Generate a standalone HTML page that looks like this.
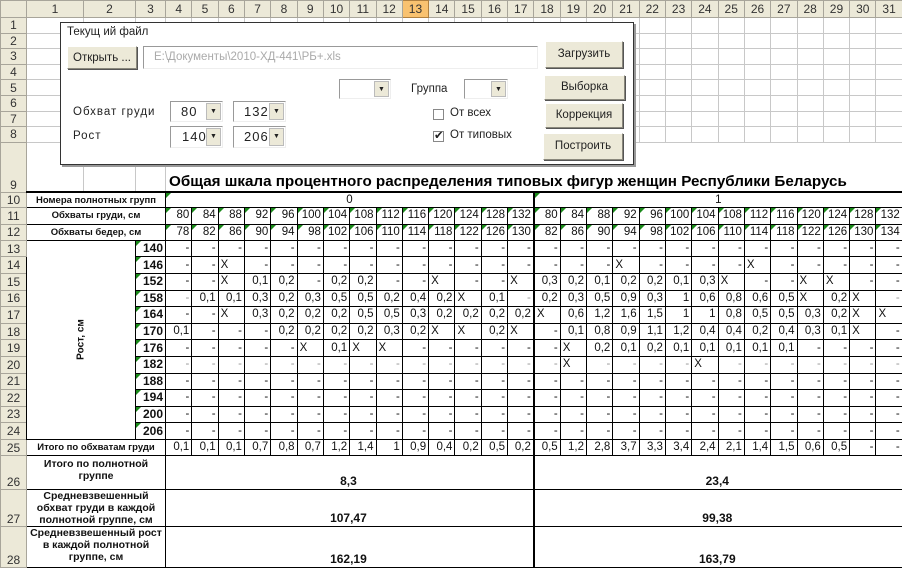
<!DOCTYPE html>
<html><head><meta charset="utf-8">
<style>
*{margin:0;padding:0;box-sizing:border-box}
body{width:902px;height:571px;overflow:hidden;background:#fff;font-family:"Liberation Sans",Arial,sans-serif;position:relative}
table{border-collapse:collapse;table-layout:fixed;position:absolute;left:0;top:0;width:902px}
td{border:1px solid #c8c8c8;font-size:11.5px;text-align:right;padding:0 2px 0 0;white-space:nowrap;overflow:hidden;line-height:13px;color:#111;position:relative}
th{background:#ece9d8;border:1px solid #a8a59a;font-weight:normal;font-size:12px;color:#333;text-align:center;padding:0}
thead th{height:17px}
th.hl{background:#f9c270;border-color:#b08040}
tbody th{text-align:center}
tr.t td{border-color:#000}
td.x{text-align:left;padding-left:2px}
td.c{text-align:center;padding:0}
td.lb{text-align:center;font-weight:bold;font-size:9.5px;line-height:11px;padding:0 1px;white-space:normal}
td.lb2{text-align:center;font-weight:bold;font-size:10.5px;line-height:12px;padding:0 5px;white-space:normal;vertical-align:top}
td.g::before{content:"";position:absolute;left:0;top:0;border-top:5px solid #1a8a1a;border-right:5px solid transparent}
td.k{font-weight:bold;font-size:12px}
tr.gy td{color:#999}
td.big{font-weight:bold;font-size:12px;text-align:center;vertical-align:bottom;padding-bottom:1px}
.tk{border-top:2px solid #000 !important}
.tl{border-left:2px solid #000 !important}
#dlg{position:absolute;left:60px;top:22px;width:574px;height:143px;background:#fff;border:1px solid #333;box-shadow:2px 2px 0 #999}
#dlg div{position:absolute;font-size:11.5px;color:#222}
.btn{background:#ece9d8;border:1px solid;border-color:#fff #8a887c #8a887c #fff;box-shadow:1px 1px 0 #555;text-align:center;line-height:22px}
.cb{border:1px solid;border-color:#999 #eee #eee #999;background:#fff}
.cb span{position:absolute;right:1px;top:1px;bottom:1px;width:15px;background:#ece9d8;border:1px solid #bbb;font-size:7px;text-align:center;line-height:15px}
.cb b{font-weight:normal;position:absolute;left:10px;top:2px;font-size:13px;letter-spacing:1px}
.chk{width:11px;height:11px;border:1px solid #888;background:#fff;font-size:10px;line-height:9px;text-align:center}
</style></head><body>
<table>
<colgroup><col style="width:26px"><col style="width:57px"><col style="width:52px"><col style="width:30px">
<col span="28" style="width:26.32px"></colgroup>
<thead><tr><th></th><th>1</th><th>2</th><th>3</th><th>4</th><th>5</th><th>6</th><th>7</th><th>8</th><th>9</th><th>10</th><th>11</th><th>12</th><th class="hl">13</th><th>14</th><th>15</th><th>16</th><th>17</th><th>18</th><th>19</th><th>20</th><th>21</th><th>22</th><th>23</th><th>24</th><th>25</th><th>26</th><th>27</th><th>28</th><th>29</th><th>30</th><th>31</th></tr></thead>
<tbody>
<tr style="height:15.6px"><th>1</th><td></td><td></td><td></td><td></td><td></td><td></td><td></td><td></td><td></td><td></td><td></td><td></td><td></td><td></td><td></td><td></td><td></td><td></td><td></td><td></td><td></td><td></td><td></td><td></td><td></td><td></td><td></td><td></td><td></td><td></td><td></td></tr>
<tr style="height:15.6px"><th>2</th><td></td><td></td><td></td><td></td><td></td><td></td><td></td><td></td><td></td><td></td><td></td><td></td><td></td><td></td><td></td><td></td><td></td><td></td><td></td><td></td><td></td><td></td><td></td><td></td><td></td><td></td><td></td><td></td><td></td><td></td><td></td></tr>
<tr style="height:15.6px"><th>3</th><td></td><td></td><td></td><td></td><td></td><td></td><td></td><td></td><td></td><td></td><td></td><td></td><td></td><td></td><td></td><td></td><td></td><td></td><td></td><td></td><td></td><td></td><td></td><td></td><td></td><td></td><td></td><td></td><td></td><td></td><td></td></tr>
<tr style="height:15.6px"><th>4</th><td></td><td></td><td></td><td></td><td></td><td></td><td></td><td></td><td></td><td></td><td></td><td></td><td></td><td></td><td></td><td></td><td></td><td></td><td></td><td></td><td></td><td></td><td></td><td></td><td></td><td></td><td></td><td></td><td></td><td></td><td></td></tr>
<tr style="height:15.6px"><th>5</th><td></td><td></td><td></td><td></td><td></td><td></td><td></td><td></td><td></td><td></td><td></td><td></td><td></td><td></td><td></td><td></td><td></td><td></td><td></td><td></td><td></td><td></td><td></td><td></td><td></td><td></td><td></td><td></td><td></td><td></td><td></td></tr>
<tr style="height:15.6px"><th>6</th><td></td><td></td><td></td><td></td><td></td><td></td><td></td><td></td><td></td><td></td><td></td><td></td><td></td><td></td><td></td><td></td><td></td><td></td><td></td><td></td><td></td><td></td><td></td><td></td><td></td><td></td><td></td><td></td><td></td><td></td><td></td></tr>
<tr style="height:15.6px"><th>7</th><td></td><td></td><td></td><td></td><td></td><td></td><td></td><td></td><td></td><td></td><td></td><td></td><td></td><td></td><td></td><td></td><td></td><td></td><td></td><td></td><td></td><td></td><td></td><td></td><td></td><td></td><td></td><td></td><td></td><td></td><td></td></tr>
<tr style="height:15.6px"><th>8</th><td></td><td></td><td></td><td></td><td></td><td></td><td></td><td></td><td></td><td></td><td></td><td></td><td></td><td></td><td></td><td></td><td></td><td></td><td></td><td></td><td></td><td></td><td></td><td></td><td></td><td></td><td></td><td></td><td></td><td></td><td></td></tr>
<tr style="height:50px"><th style="vertical-align:bottom">9</th><td></td><td></td><td></td><td colspan="28" style="border:none;text-align:left;vertical-align:bottom;font-weight:bold;font-size:15.2px;line-height:18px;padding-left:3px;color:#000">Общая шкала процентного распределения типовых фигур женщин Республики Беларусь</td></tr>
<tr class="t" style="height:15px"><th>10</th><td colspan="3" class="lb tk">Номера полнотных групп</td><td colspan="14" class="c g tk">0</td><td colspan="14" class="c g tk tl">1</td></tr>
<tr class="t" style="height:17px"><th>11</th><td colspan="3" class="lb">Обхваты груди, см</td><td class="g">80</td><td class="g">84</td><td class="g">88</td><td class="g">92</td><td class="g">96</td><td class="g">100</td><td class="g">104</td><td class="g">108</td><td class="g">112</td><td class="g">116</td><td class="g">120</td><td class="g">124</td><td class="g">128</td><td class="g">132</td><td class="g tl">80</td><td class="g">84</td><td class="g">88</td><td class="g">92</td><td class="g">96</td><td class="g">100</td><td class="g">104</td><td class="g">108</td><td class="g">112</td><td class="g">116</td><td class="g">120</td><td class="g">124</td><td class="g">128</td><td class="g">132</td></tr>
<tr class="t" style="height:16px"><th>12</th><td colspan="3" class="lb">Обхваты бедер, см</td><td class="g">78</td><td class="g">82</td><td class="g">86</td><td class="g">90</td><td class="g">94</td><td class="g">98</td><td class="g">102</td><td class="g">106</td><td class="g">110</td><td class="g">114</td><td class="g">118</td><td class="g">122</td><td class="g">126</td><td class="g">130</td><td class="g tl">82</td><td class="g">86</td><td class="g">90</td><td class="g">94</td><td class="g">98</td><td class="g">102</td><td class="g">106</td><td class="g">110</td><td class="g">114</td><td class="g">118</td><td class="g">122</td><td class="g">126</td><td class="g">130</td><td class="g">134</td></tr>
<tr class="t" style="height:16.6px"><th>13</th><td colspan="2" rowspan="12" class="c" style="font-weight:bold;font-size:10px"><div style="transform:rotate(-90deg);white-space:nowrap">Рост, см</div></td><td class="g k">140</td><td>-</td><td>-</td><td>-</td><td>-</td><td>-</td><td>-</td><td>-</td><td>-</td><td>-</td><td>-</td><td>-</td><td>-</td><td>-</td><td>-</td><td class="tl">-</td><td>-</td><td>-</td><td>-</td><td>-</td><td>-</td><td>-</td><td>-</td><td>-</td><td>-</td><td>-</td><td>-</td><td>-</td><td>-</td></tr>
<tr class="t" style="height:16.6px"><th>14</th><td class="g k">146</td><td>-</td><td>-</td><td class="x">X</td><td>-</td><td>-</td><td>-</td><td>-</td><td>-</td><td>-</td><td>-</td><td>-</td><td>-</td><td>-</td><td>-</td><td class="tl">-</td><td>-</td><td>-</td><td class="x">X</td><td>-</td><td>-</td><td>-</td><td>-</td><td class="x">X</td><td>-</td><td>-</td><td>-</td><td>-</td><td>-</td></tr>
<tr class="t" style="height:16.6px"><th>15</th><td class="g k">152</td><td>-</td><td>-</td><td class="x">X</td><td>0,1</td><td>0,2</td><td>-</td><td>0,2</td><td>0,2</td><td>-</td><td>-</td><td class="x">X</td><td>-</td><td>-</td><td class="x">X</td><td class="tl">0,3</td><td>0,2</td><td>0,1</td><td>0,2</td><td>0,2</td><td>0,1</td><td>0,3</td><td class="x">X</td><td>-</td><td>-</td><td class="x">X</td><td class="x">X</td><td>-</td><td>-</td></tr>
<tr class="t" style="height:16.6px"><th>16</th><td class="g k">158</td><td style="color:#999">-</td><td>0,1</td><td>0,1</td><td>0,3</td><td>0,2</td><td>0,3</td><td>0,5</td><td>0,5</td><td>0,2</td><td>0,4</td><td>0,2</td><td class="x">X</td><td>0,1</td><td style="color:#999">-</td><td class="tl">0,2</td><td>0,3</td><td>0,5</td><td>0,9</td><td>0,3</td><td>1</td><td>0,6</td><td>0,8</td><td>0,6</td><td>0,5</td><td class="x">X</td><td>0,2</td><td class="x">X</td><td style="color:#999">-</td></tr>
<tr class="t" style="height:16.6px"><th>17</th><td class="g k">164</td><td>-</td><td>-</td><td class="x">X</td><td>0,3</td><td>0,2</td><td>0,2</td><td>0,2</td><td>0,5</td><td>0,5</td><td>0,3</td><td>0,2</td><td>0,2</td><td>0,2</td><td>0,2</td><td class="x tl">X</td><td>0,6</td><td>1,2</td><td>1,6</td><td>1,5</td><td>1</td><td>1</td><td>0,8</td><td>0,5</td><td>0,5</td><td>0,3</td><td>0,2</td><td class="x">X</td><td class="x">X</td></tr>
<tr class="t" style="height:16.6px"><th>18</th><td class="g k">170</td><td>0,1</td><td>-</td><td>-</td><td>-</td><td>0,2</td><td>0,2</td><td>0,2</td><td>0,2</td><td>0,3</td><td>0,2</td><td class="x">X</td><td class="x">X</td><td>0,2</td><td class="x">X</td><td class="tl">-</td><td>0,1</td><td>0,8</td><td>0,9</td><td>1,1</td><td>1,2</td><td>0,4</td><td>0,4</td><td>0,2</td><td>0,4</td><td>0,3</td><td>0,1</td><td class="x">X</td><td>-</td></tr>
<tr class="t" style="height:16.6px"><th>19</th><td class="g k">176</td><td>-</td><td>-</td><td>-</td><td>-</td><td>-</td><td class="x">X</td><td>0,1</td><td class="x">X</td><td class="x">X</td><td>-</td><td>-</td><td>-</td><td>-</td><td>-</td><td class="tl">-</td><td class="x">X</td><td>0,2</td><td>0,1</td><td>0,2</td><td>0,1</td><td>0,1</td><td>0,1</td><td>0,1</td><td>0,1</td><td>-</td><td>-</td><td>-</td><td>-</td></tr>
<tr class="t gy" style="height:16.6px"><th>20</th><td class="g k" style="color:#111">182</td><td>-</td><td>-</td><td>-</td><td>-</td><td>-</td><td>-</td><td>-</td><td>-</td><td>-</td><td>-</td><td>-</td><td>-</td><td>-</td><td>-</td><td class="tl">-</td><td class="x" style="color:#111">X</td><td>-</td><td>-</td><td>-</td><td>-</td><td class="x" style="color:#111">X</td><td>-</td><td>-</td><td>-</td><td>-</td><td>-</td><td>-</td><td>-</td></tr>
<tr class="t" style="height:16.6px"><th>21</th><td class="g k">188</td><td>-</td><td>-</td><td>-</td><td>-</td><td>-</td><td>-</td><td>-</td><td>-</td><td>-</td><td>-</td><td>-</td><td>-</td><td>-</td><td>-</td><td class="tl">-</td><td>-</td><td>-</td><td>-</td><td>-</td><td>-</td><td>-</td><td>-</td><td>-</td><td>-</td><td>-</td><td>-</td><td>-</td><td>-</td></tr>
<tr class="t" style="height:16.6px"><th>22</th><td class="g k">194</td><td>-</td><td>-</td><td>-</td><td>-</td><td>-</td><td>-</td><td>-</td><td>-</td><td>-</td><td>-</td><td>-</td><td>-</td><td>-</td><td>-</td><td class="tl">-</td><td>-</td><td>-</td><td>-</td><td>-</td><td>-</td><td>-</td><td>-</td><td>-</td><td>-</td><td>-</td><td>-</td><td>-</td><td>-</td></tr>
<tr class="t" style="height:16.6px"><th>23</th><td class="g k">200</td><td>-</td><td>-</td><td>-</td><td>-</td><td>-</td><td>-</td><td>-</td><td>-</td><td>-</td><td>-</td><td>-</td><td>-</td><td>-</td><td>-</td><td class="tl">-</td><td>-</td><td>-</td><td>-</td><td>-</td><td>-</td><td>-</td><td>-</td><td>-</td><td>-</td><td>-</td><td>-</td><td>-</td><td>-</td></tr>
<tr class="t" style="height:16.6px"><th>24</th><td class="g k">206</td><td>-</td><td>-</td><td>-</td><td>-</td><td>-</td><td>-</td><td>-</td><td>-</td><td>-</td><td>-</td><td>-</td><td>-</td><td>-</td><td>-</td><td class="tl">-</td><td>-</td><td>-</td><td>-</td><td>-</td><td>-</td><td>-</td><td>-</td><td>-</td><td>-</td><td>-</td><td>-</td><td>-</td><td>-</td></tr>
<tr class="t" style="height:16.6px"><th>25</th><td colspan="3" class="lb">Итого по обхватам груди</td><td>0,1</td><td>0,1</td><td>0,1</td><td>0,7</td><td>0,8</td><td>0,7</td><td>1,2</td><td>1,4</td><td>1</td><td>0,9</td><td>0,4</td><td>0,2</td><td>0,5</td><td>0,2</td><td class="tl">0,5</td><td>1,2</td><td>2,8</td><td>3,7</td><td>3,3</td><td>3,4</td><td>2,4</td><td>2,1</td><td>1,4</td><td>1,5</td><td>0,6</td><td>0,5</td><td>-</td><td>-</td></tr>
<tr class="t" style="height:34px"><th style="vertical-align:bottom">26</th><td colspan="3" class="lb2" style="padding-top:2px">Итого по полнотной группе</td><td colspan="14" class="big">8,3</td><td colspan="14" class="big tl">23,4</td></tr>
<tr class="t" style="height:37px"><th style="vertical-align:bottom">27</th><td colspan="3" class="lb2">Средневзвешенный обхват груди в каждой полнотной группе, см</td><td colspan="14" class="big">107,47</td><td colspan="14" class="big tl">99,38</td></tr>
<tr class="t" style="height:41px"><th style="vertical-align:bottom">28</th><td colspan="3" class="lb2" style="padding:0 2px">Средневзвешенный рост в каждой полнотной группе, см</td><td colspan="14" class="big">162,19</td><td colspan="14" class="big tl">163,79</td></tr>
</tbody></table>

<div id="dlg">
<div style="left:6px;top:3px">Текущ ий файл</div>
<div class="btn" style="left:6px;top:23px;width:70px;height:23px">Открыть ...</div>
<div style="left:82px;top:23px;width:395px;height:23px;border:1px solid;border-color:#999 #eee #eee #999;color:#aaa;padding-left:10px;line-height:21px">E:\Документы\2010-ХД-441\РБ+.xls</div>
<div class="btn" style="left:484px;top:18px;width:78px;height:27px;line-height:25px">Загрузить</div>
<div class="btn" style="left:483px;top:52px;width:81px;height:25px">Выборка</div>
<div class="btn" style="left:484px;top:80px;width:78px;height:25px">Коррекция</div>
<div class="btn" style="left:482px;top:110px;width:80px;height:27px;line-height:25px">Построить</div>
<div class="cb" style="left:278px;top:56px;width:52px;height:20px"><span>▼</span></div>
<div style="left:350px;top:60px">Группа</div>
<div class="cb" style="left:403px;top:56px;width:44px;height:20px"><span>▼</span></div>
<div style="left:12px;top:83px;letter-spacing:1px">Обхват груди</div>
<div style="left:12px;top:107px;letter-spacing:1px">Рост</div>
<div class="cb" style="left:109px;top:78px;width:53px;height:21px"><b>80</b><span>▼</span></div>
<div class="cb" style="left:172px;top:78px;width:53px;height:21px"><b>132</b><span>▼</span></div>
<div class="cb" style="left:109px;top:103px;width:53px;height:22px"><b style="left:11px">140</b><span>▼</span></div>
<div class="cb" style="left:172px;top:103px;width:53px;height:22px"><b>206</b><span>▼</span></div>
<div class="chk" style="left:372px;top:86px"></div>
<div style="left:389px;top:84px">От всех</div>
<div class="chk" style="left:372px;top:108px">✔</div>
<div style="left:389px;top:106px">От типовых</div>
</div>
</body></html>
